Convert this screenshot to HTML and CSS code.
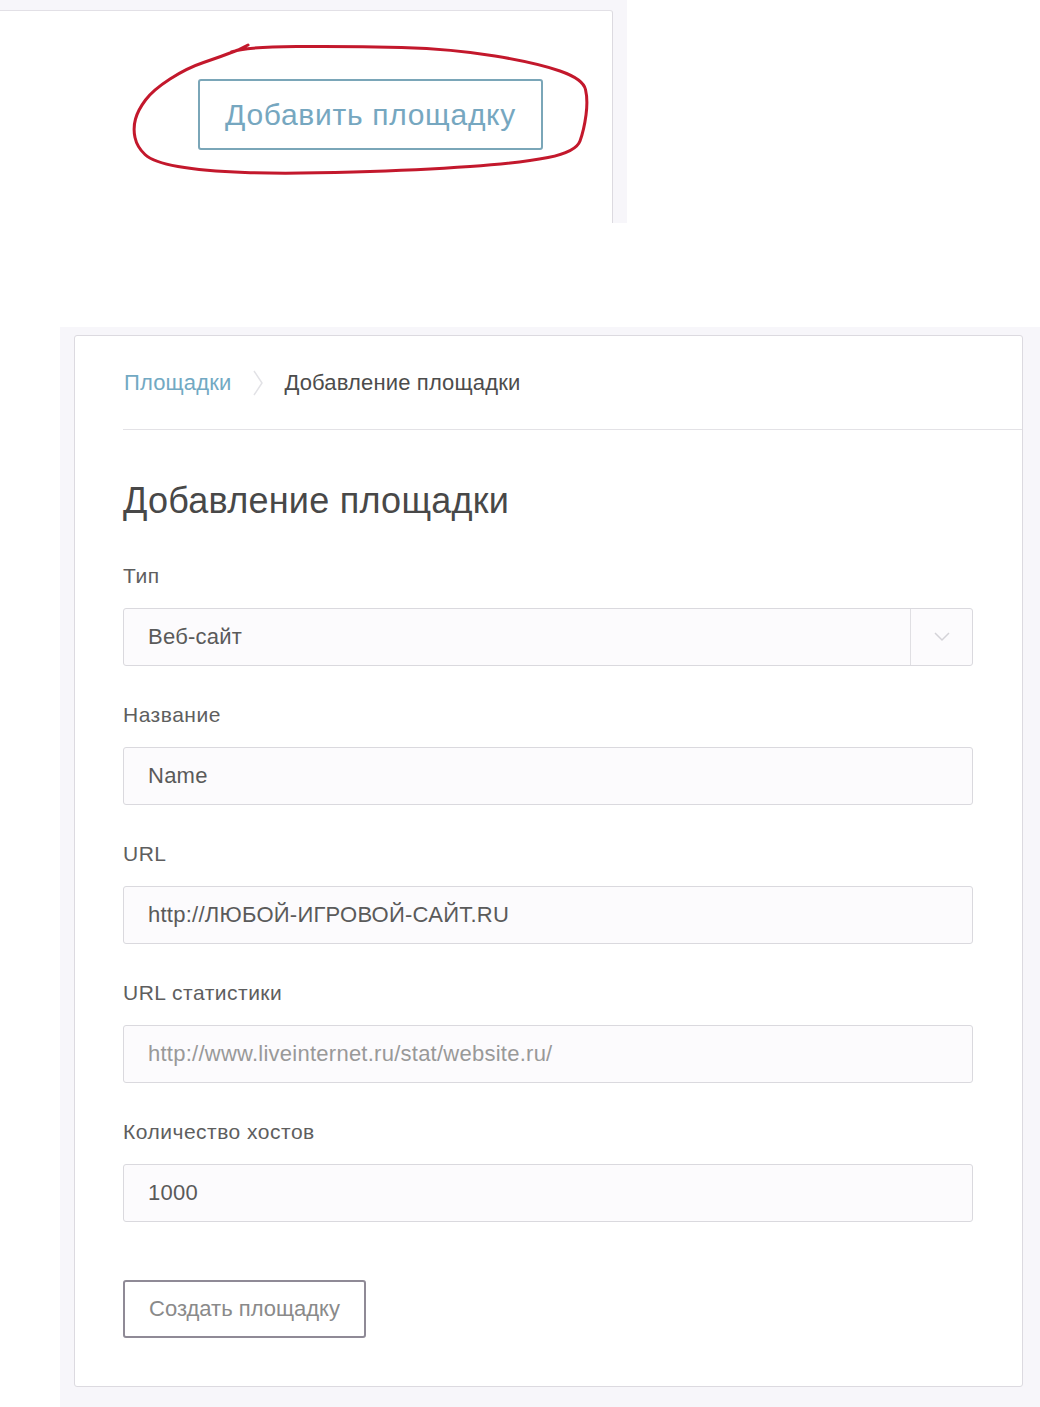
FILE: index.html
```html
<!DOCTYPE html>
<html lang="ru">
<head>
<meta charset="utf-8">
<title>Добавление площадки</title>
<link rel="stylesheet" href="styles.css">
</head>
<body>
<div class="shot shot-top">
  <div class="panel-top">
    <button class="btn-add" type="button">Добавить площадку</button>
  </div>
  <svg class="scribble" width="627" height="223" viewBox="0 0 627 223">
    <path d="M231.5,52 Q243,47 296.5,46.5 Q350,46 401.5,47.5 Q453,49 495,56 Q537,63 560,71 Q583,79 585.5,89.5 Q588,100 586,115 Q584,130 580,141 Q576,152 548,157.5 Q520,163 470,166.5 Q420,170 353.5,172 Q287,174 245,172.5 Q203,171 178,166.5 Q153,162 145,154.5 Q137,147 135,137.5 Q133,128 135.5,119 Q138,110 145.5,100 Q153,90 170,79 Q187,68 203.5,62.5 Q220,57 238,50 L248,45" fill="none" stroke="#c3182c" stroke-width="3" stroke-linecap="round" stroke-linejoin="round"/>
  </svg>
</div>

<div class="shot shot-bottom">
  <div class="card">
    <nav class="crumbs">
      <a class="crumb-link" href="#">Площадки</a>
      <svg class="crumb-sep" width="10" height="26" viewBox="0 0 10 26"><polyline points="1,1 9,13 1,25" fill="none" stroke="#e2e2e6" stroke-width="1.5"/></svg>
      <span class="crumb-current">Добавление площадки</span>
    </nav>
    <form class="form">
      <h1 class="title">Добавление площадки</h1>
      <div class="field">
        <label class="label">Тип</label>
        <div class="select">
          <span class="select-value">Веб-сайт</span>
          <span class="select-arrow"><svg width="16" height="10" viewBox="0 0 16 10"><polyline points="1,1 8,8 15,1" fill="none" stroke="#d4d3d8" stroke-width="1.5"/></svg></span>
        </div>
      </div>
      <div class="field">
        <label class="label">Название</label>
        <input class="input" type="text" value="Name">
      </div>
      <div class="field">
        <label class="label">URL</label>
        <input class="input" type="text" value="http://ЛЮБОЙ-ИГРОВОЙ-САЙТ.RU">
      </div>
      <div class="field">
        <label class="label">URL статистики</label>
        <input class="input" type="text" placeholder="http://www.liveinternet.ru/stat/website.ru/">
      </div>
      <div class="field">
        <label class="label">Количество хостов</label>
        <input class="input" type="text" value="1000">
      </div>
      <button class="btn-create" type="button">Создать площадку</button>
    </form>
  </div>
</div>
</body>
</html>
```

FILE: styles.css
```css
* { box-sizing: border-box; }

body {
  margin: 0;
  background: #ffffff;
  font-family: "Liberation Sans", Arial, sans-serif;
  color: #555;
}

.shot {
  background: #f7f6fa;
}

.shot-top {
  position: relative;
  width: 627px;
  height: 223px;
  padding: 10px 14px 0 0;
}

.panel-top {
  height: 100%;
  background: #fff;
  border-top: 1px solid #e2e0e6;
  border-right: 1px solid #dcdae0;
  border-top-right-radius: 3px;
  display: flex;
  justify-content: flex-end;
  align-items: flex-start;
  padding: 68px 69px 0 0;
}

.btn-add {
  width: 345px;
  height: 71px;
  border: 2px solid #7aa6b8;
  border-radius: 3px;
  background: #fff;
  color: #76a7c0;
  font-family: "Liberation Sans", Arial, sans-serif;
  font-size: 30px;
  letter-spacing: 0.7px;
  padding: 0;
}

.scribble {
  position: absolute;
  left: 0;
  top: 0;
  pointer-events: none;
}

.shot-bottom {
  margin: 104px 0 0 60px;
  width: 980px;
  height: 1080px;
  padding: 8px 17px 20px 14px;
}

.card {
  height: 100%;
  background: #fff;
  border: 1px solid #dcdae0;
  border-radius: 3px;
  padding-left: 48px;
}

.crumbs {
  height: 94px;
  border-bottom: 1px solid #e3e2e6;
  display: flex;
  align-items: center;
  font-size: 22px;
  letter-spacing: 0.15px;
  padding-left: 1px;
}

.crumb-link {
  color: #72a9c3;
  text-decoration: none;
}

.crumb-sep {
  margin: 0 21px 0 22px;
}

.crumb-current {
  color: #4c4c4c;
}

.form {
  padding: 51px 49px 0 0;
}

.title {
  margin: 0 0 42px;
  font-size: 36px;
  letter-spacing: 0.25px;
  line-height: 40px;
  font-weight: normal;
  color: #484848;
}

.field + .field {
  margin-top: 36px;
}

.label {
  display: block;
  font-size: 21px;
  letter-spacing: 0.5px;
  line-height: 26px;
  color: #5e5e5e;
  margin-bottom: 19px;
}

.input,
.select {
  display: block;
  width: 100%;
  height: 58px;
  border: 1px solid #dad9de;
  border-radius: 3px;
  background: #fcfbfd;
  font-family: "Liberation Sans", Arial, sans-serif;
  font-size: 22px;
  letter-spacing: 0.25px;
  color: #5a5a5a;
  padding: 0 24px;
}

.input::placeholder {
  color: #999;
}

.select {
  display: flex;
  align-items: center;
  padding: 0 0 0 24px;
}

.select-value {
  flex: 1;
}

.select-arrow {
  width: 62px;
  height: 100%;
  border-left: 1px solid #e0dfe3;
  display: flex;
  align-items: center;
  justify-content: center;
}

.btn-create {
  margin-top: 58px;
  width: 243px;
  height: 58px;
  border: 2px solid #8f8a96;
  border-radius: 3px;
  background: #fff;
  color: #8a8a8a;
  font-family: "Liberation Sans", Arial, sans-serif;
  font-size: 22px;
  padding: 0;
}
```
